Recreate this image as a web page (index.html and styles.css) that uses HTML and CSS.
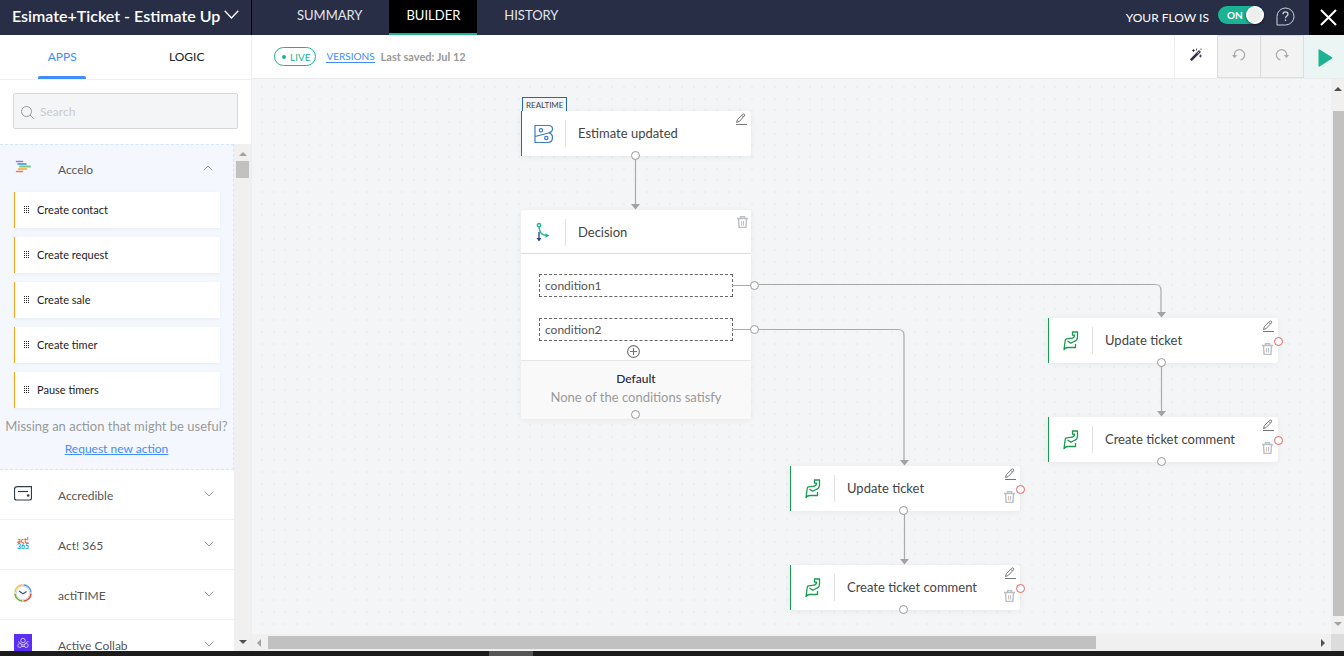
FILE: index.html
```html
<!DOCTYPE html>
<html lang="en">
<head>
<meta charset="utf-8">
<title>Flow builder</title>
<link rel="stylesheet" href="styles.css">
</head>
<body>
<svg class="defs" aria-hidden="true">
  <symbol id="pencil" viewBox="0 0 12 12"><path d="M1.500 9.500 2.300 6.800 7.700 1.200Q8.500.500 9.300 1.200T9.500 2.900L4.200 8.500zM6.700 2.200 8.500 4" fill="none" stroke="currentColor"/><path d="M1 11.500h11" stroke="currentColor" fill="none"/></symbol>
  <symbol id="trash" viewBox="0 0 11 12"><path d="M0 2.500h11M3.500 2.500v-2h4v2M1.500 3l.6 8.500h6.800L9.500 3" fill="none" stroke="#bbbec4" stroke-width="1.400"/><path d="M4.500 5v4.500" stroke="#e5b99a"/><path d="M6.500 5v4.500" stroke="#a9bfe6"/></symbol>
  <symbol id="chev" viewBox="0 0 10 6"><path d="M.7.700 5 5 9.300.700" fill="none" stroke="currentColor"/></symbol>
  <symbol id="desk" viewBox="0 0 16 20"><path d="M7.500 7.300 3.500 7.800Q2.400 8 2.300 9L1 18.500Q2.500 16.500 5 16.500H12.500V13M4.500 10l3.300 2.300 3.200-1.800Q14.500 9.500 14.500 6V1H9.500V4.200H11.500Q11.500 7.300 7.500 7.300" fill="none" stroke="#179b50" stroke-width="1.300" stroke-linejoin="round"/></symbol>
  <symbol id="grip" viewBox="0 0 5 8"><path d="M.5 0v8M2.500 0v8M4.500 0v8" stroke="#222" stroke-dasharray="1 1" fill="none"/></symbol>
</svg>
<div class="app">
  <header class="topbar">
    <button class="flow-title"><span>Esimate+Ticket - Estimate Up</span><svg width="15" height="9" viewBox="0 0 15 9"><path d="M.7.700 7.500 8 14.300.700" fill="none" stroke="#fff" stroke-width="1.300"/></svg></button>
    <nav class="views"><a href="#summary">SUMMARY</a><a href="#builder" class="active">BUILDER</a><a href="#history">HISTORY</a></nav>
    <div class="top-actions">
      <label for="flow-on">YOUR FLOW IS</label>
      <span class="switch"><input type="checkbox" id="flow-on" checked><span class="switch-text">ON</span></span>
      <button class="help" aria-label="Help"><svg width="19" height="19" viewBox="0 0 19 19"><path d="M1 18V9.500A8.500 8.500 0 1 1 9.500 18z" fill="none" stroke="#cfd2da"/><path d="M7 7.200c0-3 5-3 5 0 0 1.800-2.500 1.800-2.500 4M9.500 12.500V14" fill="none" stroke="#cfd2da" stroke-width="1.300"/></svg></button>
      <button class="close" aria-label="Close"><svg width="17" height="17" viewBox="0 0 17 17"><path d="M1 1l15 15M16 1 1 16" stroke="#fff" stroke-width="2"/></svg></button>
    </div>
  </header>
  <div class="work">
    <aside class="side">
      <nav class="side-tabs"><a href="#apps" class="active">APPS</a><a href="#logic">LOGIC</a></nav>
      <div class="search"><div class="search-box">
        <svg width="13" height="13" viewBox="0 0 13 13"><circle cx="5.500" cy="5.500" r="5" fill="none" stroke="#999"/><path d="m9 9 3.700 3.700" stroke="#999"/></svg>
        <input type="search" placeholder="Search" aria-label="Search apps">
      </div></div>
      <div class="list-wrap">
        <div class="list">
          <section class="open">
            <button class="app-row"><svg class="logo" width="18" height="18" viewBox="0 0 18 18"><g stroke-width="1.500" stroke-linecap="round"><path d="M2.500 3.500h6" stroke="#8c7bd2"/><path d="M4 6h8" stroke="#2b96d1"/><path d="M6 8.500h10" stroke="#7cc98a" stroke-width="2"/><path d="M4.500 11h8" stroke="#f9a72b"/><path d="M2.500 13.500h6" stroke="#ee7950"/></g></svg><span>Accelo</span><svg class="chev up" width="10" height="6"><use href="#chev"/></svg></button>
            <ul class="actions">
              <li><svg width="5" height="8"><use href="#grip"/></svg>Create contact</li>
              <li><svg width="5" height="8"><use href="#grip"/></svg>Create request</li>
              <li><svg width="5" height="8"><use href="#grip"/></svg>Create sale</li>
              <li><svg width="5" height="8"><use href="#grip"/></svg>Create timer</li>
              <li><svg width="5" height="8"><use href="#grip"/></svg>Pause timers</li>
            </ul>
            <p class="missing">Missing an action that might be useful?</p>
            <a class="request" href="#request">Request new action</a>
          </section>
          <button class="app-row"><svg class="logo" width="18" height="18" viewBox="0 0 18 18"><path d="M3.500 2.600h14V14q0 2-2 2h-13q-2 0-2-2V5q0-2.400 3-2.400z" fill="none" stroke="#2f3e46" stroke-width="1.200"/><path d="M4 7.500h10" stroke="#2f3e46" stroke-width="1.200"/><circle cx="14.200" cy="11.500" r="1.300" fill="#2f3e46"/></svg><span>Accredible</span><svg class="chev" width="10" height="6"><use href="#chev"/></svg></button>
          <button class="app-row"><span class="logo act"><b>act!</b><b>365</b></span><span>Act! 365</span><svg class="chev" width="10" height="6"><use href="#chev"/></svg></button>
          <button class="app-row"><svg class="logo" width="18" height="18" viewBox="0 0 18 18"><g fill="none" stroke-width="1.600"><path d="M9.500.900A8.200 8.200 0 0 1 17.100 8.500" stroke="#5b9fe0"/><path d="M17.100 9.500A8.200 8.200 0 0 1 9.500 17.100" stroke="#e74c3c"/><path d="M8.500 17.100A8.200 8.200 0 0 1 .900 9.500" stroke="#6fb23c"/><path d="M.900 8.500A8.200 8.200 0 0 1 8.500.900" stroke="#f6c04a"/><circle cx="9" cy="9" r="6.700" stroke="#d5d9df" stroke-width="1"/><path d="M5 7 9 9.700 12.500 7.500" stroke="#45597a" stroke-width="1.200"/></g></svg><span>actiTIME</span><svg class="chev" width="10" height="6"><use href="#chev"/></svg></button>
          <button class="app-row"><svg class="logo" width="18" height="18" viewBox="0 0 18 18"><path fill="#5b2df5" d="M0 0h18v18H0z"/><g fill="none" stroke="#d9cfff" stroke-width=".9"><circle cx="9" cy="6.500" r="2.200"/><circle cx="5.800" cy="11.500" r="2"/><circle cx="12.200" cy="11.500" r="2"/><path d="M4 7.500c2 0 3 3.500 5 3.500s3-3.500 5.500-3.500M8 12.500h2"/></g></svg><span>Active Collab</span><svg class="chev" width="10" height="6"><use href="#chev"/></svg></button>
        </div>
        <div class="vbar"><i class="tri up light"></i><i class="thumb"></i><i class="tri down end"></i></div>
      </div>
    </aside>
    <main class="main">
      <div class="toolbar">
        <span class="live">LIVE</span>
        <a class="versions" href="#versions">VERSIONS</a>
        <span class="saved">Last saved: Jul 12</span>
        <div class="tools">
          <button class="tool" aria-label="Auto arrange"><svg width="12" height="13" viewBox="0 0 12 13"><path d="M.8 12.200 10 3" stroke="#2a3150" stroke-width="2.600"/><path d="m7.500 5.500 1.800-1.800" stroke="#fff" stroke-width=".8"/><path d="M2 2.500h3M3.500 1v3M6.500.5v2M10.500 6.500v3M9 8h3M11 .5v1.500" stroke="#2a3150" stroke-width=".8"/></svg></button>
          <button class="tool gray" aria-label="Undo"><svg width="14" height="13" viewBox="0 0 14 13"><path d="M2.500 8.500A5.200 5.200 0 1 1 8.500 12" fill="none" stroke="#aaa" stroke-width="1.200"/><path d="M0 7h5L2.700 10.200z" fill="#aaa"/></svg></button>
          <button class="tool gray" aria-label="Redo"><svg width="14" height="13" viewBox="0 0 14 13"><path d="M11.500 8.500A5.200 5.200 0 1 0 5.500 12" fill="none" stroke="#aaa" stroke-width="1.200"/><path d="M14 7H9l2.300 3.200z" fill="#aaa"/></svg></button>
          <button class="tool run" aria-label="Run"><svg width="15" height="18" viewBox="0 0 15 18"><path d="M.5 1.200q0-1.400 1.200-.6L14 8.300q.8.700 0 1.300L1.700 17.400q-1.200.7-1.200-.600z" fill="#1cb394"/></svg></button>
        </div>
      </div>
      <div class="stage">
        <div class="canvas">
          <svg class="wires" width="100%" height="100%">
            <defs><pattern id="dots" width="35" height="35" patternUnits="userSpaceOnUse" x="9" y="7"><path d="M0 0h2v2H0zM12 0h2v2h-2zM23 0h2v2h-2zM0 12h2v2H0zM12 12h2v2h-2zM23 12h2v2h-2zM0 23h2v2H0zM12 23h2v2h-2zM23 23h2v2h-2z" fill="#edeef1"/></pattern></defs>
            <rect width="100%" height="100%" fill="url(#dots)"/>
            <g fill="none" stroke="#aaa" stroke-width="1.200">
              <path d="M383.500 77v50"/><path d="M482 206.500h20M507 205.500h396q6 0 6 6V234"/><path d="M482 250.500h164q6 0 6 6V382"/><path d="M909.500 284v50"/><path d="M652.500 431v50"/>
            </g>
            <g fill="#a3a3a3"><path d="M379 125h9l-4.500 5.500zM905 233h9l-4.500 5.500zM648 381h9l-4.500 5.500zM905 332h9l-4.500 5.500zM648 480h9l-4.500 5.500z"/></g>
          </svg>
          <article class="node trigger n-trigger">
            <span class="badge">REALTIME</span>
            <svg class="n-icon" width="20" height="20" viewBox="0 0 20 20"><path d="M1 1.500h13.500q4 0 4 3.500 0 3-4 4L1 12.500zM1 12.500V18.500h12.500q5 0 5-5 0-3.500-3.500-4.600" fill="none" stroke="#3a7fc0" stroke-width="1.200"/><circle cx="7" cy="6.300" r="1.700" fill="none" stroke="#3a7fc0" stroke-width="1.200"/><circle cx="12.300" cy="14" r="1.700" fill="none" stroke="#3a7fc0" stroke-width="1.200"/></svg>
            <h3>Estimate updated</h3>
            <button class="edit" aria-label="Edit"><svg width="12" height="12"><use href="#pencil"/></svg></button>
            <i class="port"></i>
          </article>
          <article class="decision n-decision">
            <div class="d-head">
              <svg class="n-icon" width="20" height="20" viewBox="0 0 20 20"><path d="M6 5c.3 5 3 8.500 8 8.500" fill="none" stroke="#20b795" stroke-width="1.400"/><circle cx="6" cy="3.200" r="1.700" fill="none" stroke="#20b795" stroke-width="1.400"/><path d="M12.500 11.300 16.500 13.500l-4 2.200z" fill="#20b795"/><path d="M6 10v6" stroke="#2c4a8a" stroke-width="1.400"/><path d="M3.500 16h5L6 19.500z" fill="#2c4a8a"/></svg>
              <h3>Decision</h3>
              <button class="del" aria-label="Delete"><svg width="11" height="12"><use href="#trash"/></svg></button>
            </div>
            <div class="d-body">
              <div class="cond">condition1<i class="wire"></i><i class="port side-port"></i></div>
              <div class="cond">condition2<i class="wire"></i><i class="port side-port"></i></div>
              <button class="add" aria-label="Add condition"><svg width="13" height="13" viewBox="0 0 13 13"><circle cx="6.500" cy="6.500" r="5.900" fill="none" stroke="#777" stroke-width="1.200"/><path d="M6.500 3v7M3 6.500h7" stroke="#777" stroke-width="1.200"/></svg></button>
            </div>
            <div class="d-foot"><b>Default</b><span>None of the conditions satisfy</span><i class="port foot-port"></i></div>
          </article>
          <article class="node n-update-a"><svg class="n-icon" width="16" height="20"><use href="#desk"/></svg><h3>Update ticket</h3><button class="edit" aria-label="Edit"><svg width="12" height="12"><use href="#pencil"/></svg></button><button class="del" aria-label="Delete"><svg width="11" height="12"><use href="#trash"/></svg></button><i class="port"></i><i class="port err"></i></article>
          <article class="node n-comment-a"><svg class="n-icon" width="16" height="20"><use href="#desk"/></svg><h3>Create ticket comment</h3><button class="edit" aria-label="Edit"><svg width="12" height="12"><use href="#pencil"/></svg></button><button class="del" aria-label="Delete"><svg width="11" height="12"><use href="#trash"/></svg></button><i class="port"></i><i class="port err"></i></article>
          <article class="node n-update-b"><svg class="n-icon" width="16" height="20"><use href="#desk"/></svg><h3>Update ticket</h3><button class="edit" aria-label="Edit"><svg width="12" height="12"><use href="#pencil"/></svg></button><button class="del" aria-label="Delete"><svg width="11" height="12"><use href="#trash"/></svg></button><i class="port"></i><i class="port err"></i></article>
          <article class="node n-comment-b"><svg class="n-icon" width="16" height="20"><use href="#desk"/></svg><h3>Create ticket comment</h3><button class="edit" aria-label="Edit"><svg width="12" height="12"><use href="#pencil"/></svg></button><button class="del" aria-label="Delete"><svg width="11" height="12"><use href="#trash"/></svg></button><i class="port"></i><i class="port err"></i></article>
        </div>
        <div class="vbar stage-v"><i class="tri up"></i><i class="thumb"></i><i class="tri down light"></i></div>
        <div class="hbar"><i class="tri left light"></i><i class="thumb"></i><i class="tri right"></i></div>
        <div class="corner"></div>
      </div>
    </main>
  </div>
  <footer class="taskbar"><i></i></footer>
</div>
</body>
</html>
```
FILE: styles.css
```css
* { box-sizing: border-box; }
body { margin: 0; font-family: Lato, "Open Sans", sans-serif; font-size: 13px; color: #444; overflow: hidden; }
button { font: inherit; color: inherit; background: none; border: 0; padding: 0; display: flex; align-items: center; justify-content: center; }
a { color: inherit; text-decoration: none; }
h3, p, ul { margin: 0; padding: 0; }
svg { flex: none; display: block; }
.defs { position: absolute; width: 0; height: 0; }
.app { height: 100vh; display: flex; flex-direction: column; background: #fff; }

.topbar { height: 35px; flex: none; display: flex; background: #272e46; color: #fff; }
.flow-title { width: 252px; padding: 0 12px; border-right: 1px solid #000; font-size: 16px; font-weight: 600; color: #fff; justify-content: flex-start; }
.flow-title span { flex: 1; text-align: left; white-space: nowrap; overflow: hidden; line-height: 24px; padding-bottom: 4px; }
.flow-title svg { margin-bottom: 6px; }
.views { display: flex; padding-left: 28px; font-size: 13px; color: #e4e6ea; }
.views a { padding: 0 17px; line-height: 31px; border-bottom: 2px solid transparent; height: 35px; }
.views a:first-child { margin-right: 10px; }
.views a:last-child { margin-left: 10px; }
.views .active { background: #000; color: #fff; border-color: #1cb394; }
.top-actions { margin-left: auto; display: flex; align-items: center; }
.top-actions label { font-size: 12px; padding-right: 9px; line-height: 16px; }
.switch { position: relative; display: flex; margin-bottom: 5px; }
.switch input { appearance: none; width: 46px; height: 18px; margin: 0; border-radius: 9px; background: #1cb394; }
.switch input::after { content: ""; position: absolute; right: 0; top: 0; width: 18px; height: 18px; border-radius: 50%; background: radial-gradient(#eee 50%, #fff 60%); box-shadow: 0 1px 3px #0008; }
.switch-text { position: absolute; left: 9px; top: 1px; font-size: 10px; line-height: 16px; font-weight: 700; pointer-events: none; }
.help { margin: 0 14px 2px 12px; }
.close { width: 35px; height: 35px; background: #000; padding-left: 4px; }

.work { flex: 1; min-height: 0; display: flex; }
.side { width: 252px; flex: none; display: flex; flex-direction: column; border-right: 1px solid #ededf0; }
.side-tabs { height: 45px; flex: none; display: flex; padding-right: 2px; border-bottom: 1px solid #efefef; font-size: 12px; line-height: 44px; }
.side-tabs a { flex: 1; display: flex; flex-direction: column; align-items: center; color: #222; }
.side-tabs .active { color: #408dfb; }
.side-tabs .active::after { content: ""; width: 48px; height: 3px; margin-top: -3px; border-radius: 2px 2px 0 0; background: #408dfb; }
.search { padding: 13px; flex: none; height: 64px; }
.search-box { display: flex; align-items: center; gap: 6px; height: 36px; padding: 0 7px; border: 1px solid #d5d7da; border-radius: 2px; background: #f4f5f7; }
.search-box svg { margin-top: 3px; }
.search input { flex: 1; min-width: 0; border: 0; padding: 0; background: none; outline: 0; font: 12px Lato, sans-serif; }
.search input::placeholder { color: #c9cbcf; }
.list-wrap { flex: 1; min-height: 0; display: flex; }
.list { flex: 1; overflow: hidden; }
.open { background: #f4f8fe; border: 1px dashed #d3e5f8; border-left: 0; height: 326px; }
.app-row { width: 100%; height: 50px; padding: 2px 20px 0 14px; gap: 26px; border-bottom: 1px solid #f1f1f1; font-size: 12px; color: #555; justify-content: flex-start; }
.open .app-row { height: 47px; border: 0; }
.app-row > span:not(.logo) { flex: 1; text-align: left; }
.logo { width: 18px; flex: none; margin-bottom: 5px; }
.chev { color: #999; margin-bottom: 3px; }
.chev.up { transform: rotate(180deg); }
.act { display: flex; flex-direction: column; align-items: center; font: 8px/6px Lato, sans-serif; color: #ee5b1f; }
.act b { font-weight: 900; font-size: 7px; }
.act b + b { color: #1fa9d0; }
.actions { list-style: none; padding: 0 13px 0 14px; display: flex; flex-direction: column; gap: 9px; }
.actions li { height: 36px; display: flex; align-items: center; gap: 8px; padding: 0 0 1px 9px; background: #fff; border-left: 1px solid #f9a51a; font-size: 11px; color: #222; box-shadow: 0 1px 3px #e6ebf2; }
.missing { margin-top: 9px; font-size: 13px; line-height: 18px; text-align: center; color: #999; white-space: nowrap; }
.request { display: block; margin-top: 5px; text-align: center; font-size: 12px; line-height: 18px; color: #408dfb; text-decoration: underline; }

.vbar { width: 17px; background: #f0f0f0; display: flex; flex-direction: column; align-items: center; padding: 8px 0 7px; }
.vbar .thumb { width: 13px; height: 17px; margin-top: 5px; background: #c1c1c1; }
.tri { width: 0; height: 0; flex: none; border: 4px solid transparent; }
.tri.up { border-bottom-color: #505050; border-top: 0; }
.tri.down { border-top-color: #505050; border-bottom: 0; }
.tri.left { border-right-color: #505050; border-left: 0; }
.tri.right { border-left-color: #505050; border-right: 0; }
.tri.up.light { border-bottom-color: #a3a3a3; }
.tri.down.light { border-top-color: #a3a3a3; }
.tri.left.light { border-right-color: #a3a3a3; }
.tri.end { margin-top: auto; }

.main { flex: 1; min-width: 0; display: flex; flex-direction: column; }
.toolbar { height: 44px; flex: none; display: flex; align-items: center; padding-left: 22px; border-bottom: 1px solid #ebecee; }
.live { display: flex; align-items: center; gap: 4px; height: 19px; padding: 1px 5px 0 7px; border: 1px solid #1cb394; border-radius: 10px; color: #1cb394; font-size: 10px; }
.live::before { content: ""; width: 4px; height: 4px; border-radius: 50%; background: #1cb394; }
.versions { margin: 0 6px 0 10px; font-size: 10px; line-height: 12px; color: #408dfb; border-bottom: 1px solid #408dfb; }
.saved { font-size: 11px; font-weight: 700; color: #999; }
.tools { margin-left: auto; display: flex; align-self: stretch; }
.tool { width: 43px; padding-bottom: 4px; border-left: 1px solid #ededed; }
.tool.gray { background: #f3f3f3; border: 1px solid #dcdcdc; border-right: 0; }
.tool.run { width: 41px; padding: 2px 0 0 3px; background: #ebf6f4; border-color: #dcdcdc; }

.stage { flex: 1; min-height: 0; display: grid; grid-template-columns: 1fr 13px; grid-template-rows: 1fr 17px; }
.canvas { position: relative; overflow: hidden; background: #f4f5f7; }
.wires { position: absolute; inset: 0; }
.stage-v { width: 13px; padding: 8px 0; }
.stage-v .thumb { flex: 1; margin: 20px 0 6px 2px; width: 11px; }
.hbar { display: flex; align-items: center; background: #f0f0f0; padding: 0 6px 0 5px; }
.hbar .thumb { height: 13px; flex: none; width: 77.5%; margin-left: 7px; background: #c1c1c1; }
.hbar .right { margin-left: auto; }
.corner { background: #dcdcdc; }

.node, .decision { position: absolute; width: 230px; background: #fff; border-radius: 3px; box-shadow: 0 1px 6px #0000000f; }
.node { height: 45px; display: flex; align-items: center; border-left: 1px solid #179b50; border-radius: 0 3px 3px 0; }
.trigger { border-color: #2268b2; }
.n-trigger { left: 269px; top: 32px; }
.n-decision { left: 269px; top: 131px; }
.n-update-a { left: 796px; top: 239px; }
.n-comment-a { left: 796px; top: 338px; }
.n-update-b { left: 538px; top: 387px; }
.n-comment-b { left: 538px; top: 486px; }
.n-icon { box-sizing: content-box; width: 20px; padding: 0 11px 0 12px; }
.node h3, .d-head h3 { border-left: 1px solid #e0e0e0; padding-left: 12px; line-height: 27px; font-size: 13px; font-weight: 400; color: #444; }
.badge { position: absolute; left: 0; top: -14px; height: 14px; padding: 0 3px; border: 1px solid #2268b2; border-bottom: 0; background: #f4f5f7; font-size: 8px; line-height: 14px; }
.edit, .del { position: absolute; color: #777; }
.edit { right: 4px; top: 2px; }
.del { right: 5px; top: 25px; }
.port { position: absolute; width: 9px; height: 9px; border: 1px solid #999; border-radius: 50%; background: #fff; left: 108px; bottom: -4px; }
.trigger .port { left: 109px; }
.port.err { border-color: #f0605a; left: auto; right: -5px; bottom: 17px; }
.d-head { height: 44px; position: relative; display: flex; align-items: center; border-bottom: 1px solid #dcdcdc; }
.d-head h3 { margin-left: 1px; margin-top: 2px; }
.d-head .del { top: 6px; right: 3px; }
.d-body { padding: 20px 18px 2px; display: flex; flex-direction: column; }
.cond { position: relative; height: 23px; border: 1px dashed #666; padding-left: 5px; line-height: 21px; font-size: 12px; color: #555; }
.cond + .cond { margin-top: 21px; }
.wire { position: absolute; left: 100%; top: 10px; width: 18px; height: 1px; background: #aaa; }
.port.side-port { left: auto; right: -27px; bottom: 6px; }
.add { align-self: center; margin: 4px 5px 0 0; }
.d-foot { position: relative; height: 59px; padding-top: 9px; border-top: 1px solid #e6e6e6; background: #f9f9f9; display: flex; flex-direction: column; align-items: center; line-height: 18px; color: #999; font-size: 13px; }
.d-foot b { font-size: 12px; font-weight: 500; color: #23283f; }
.port.foot-port { left: 110px; bottom: 0; }

.taskbar { height: 5px; flex: none; background: #1c1c1c; display: flex; }
.taskbar i { margin-left: 489px; width: 44px; background: #555; }
```
